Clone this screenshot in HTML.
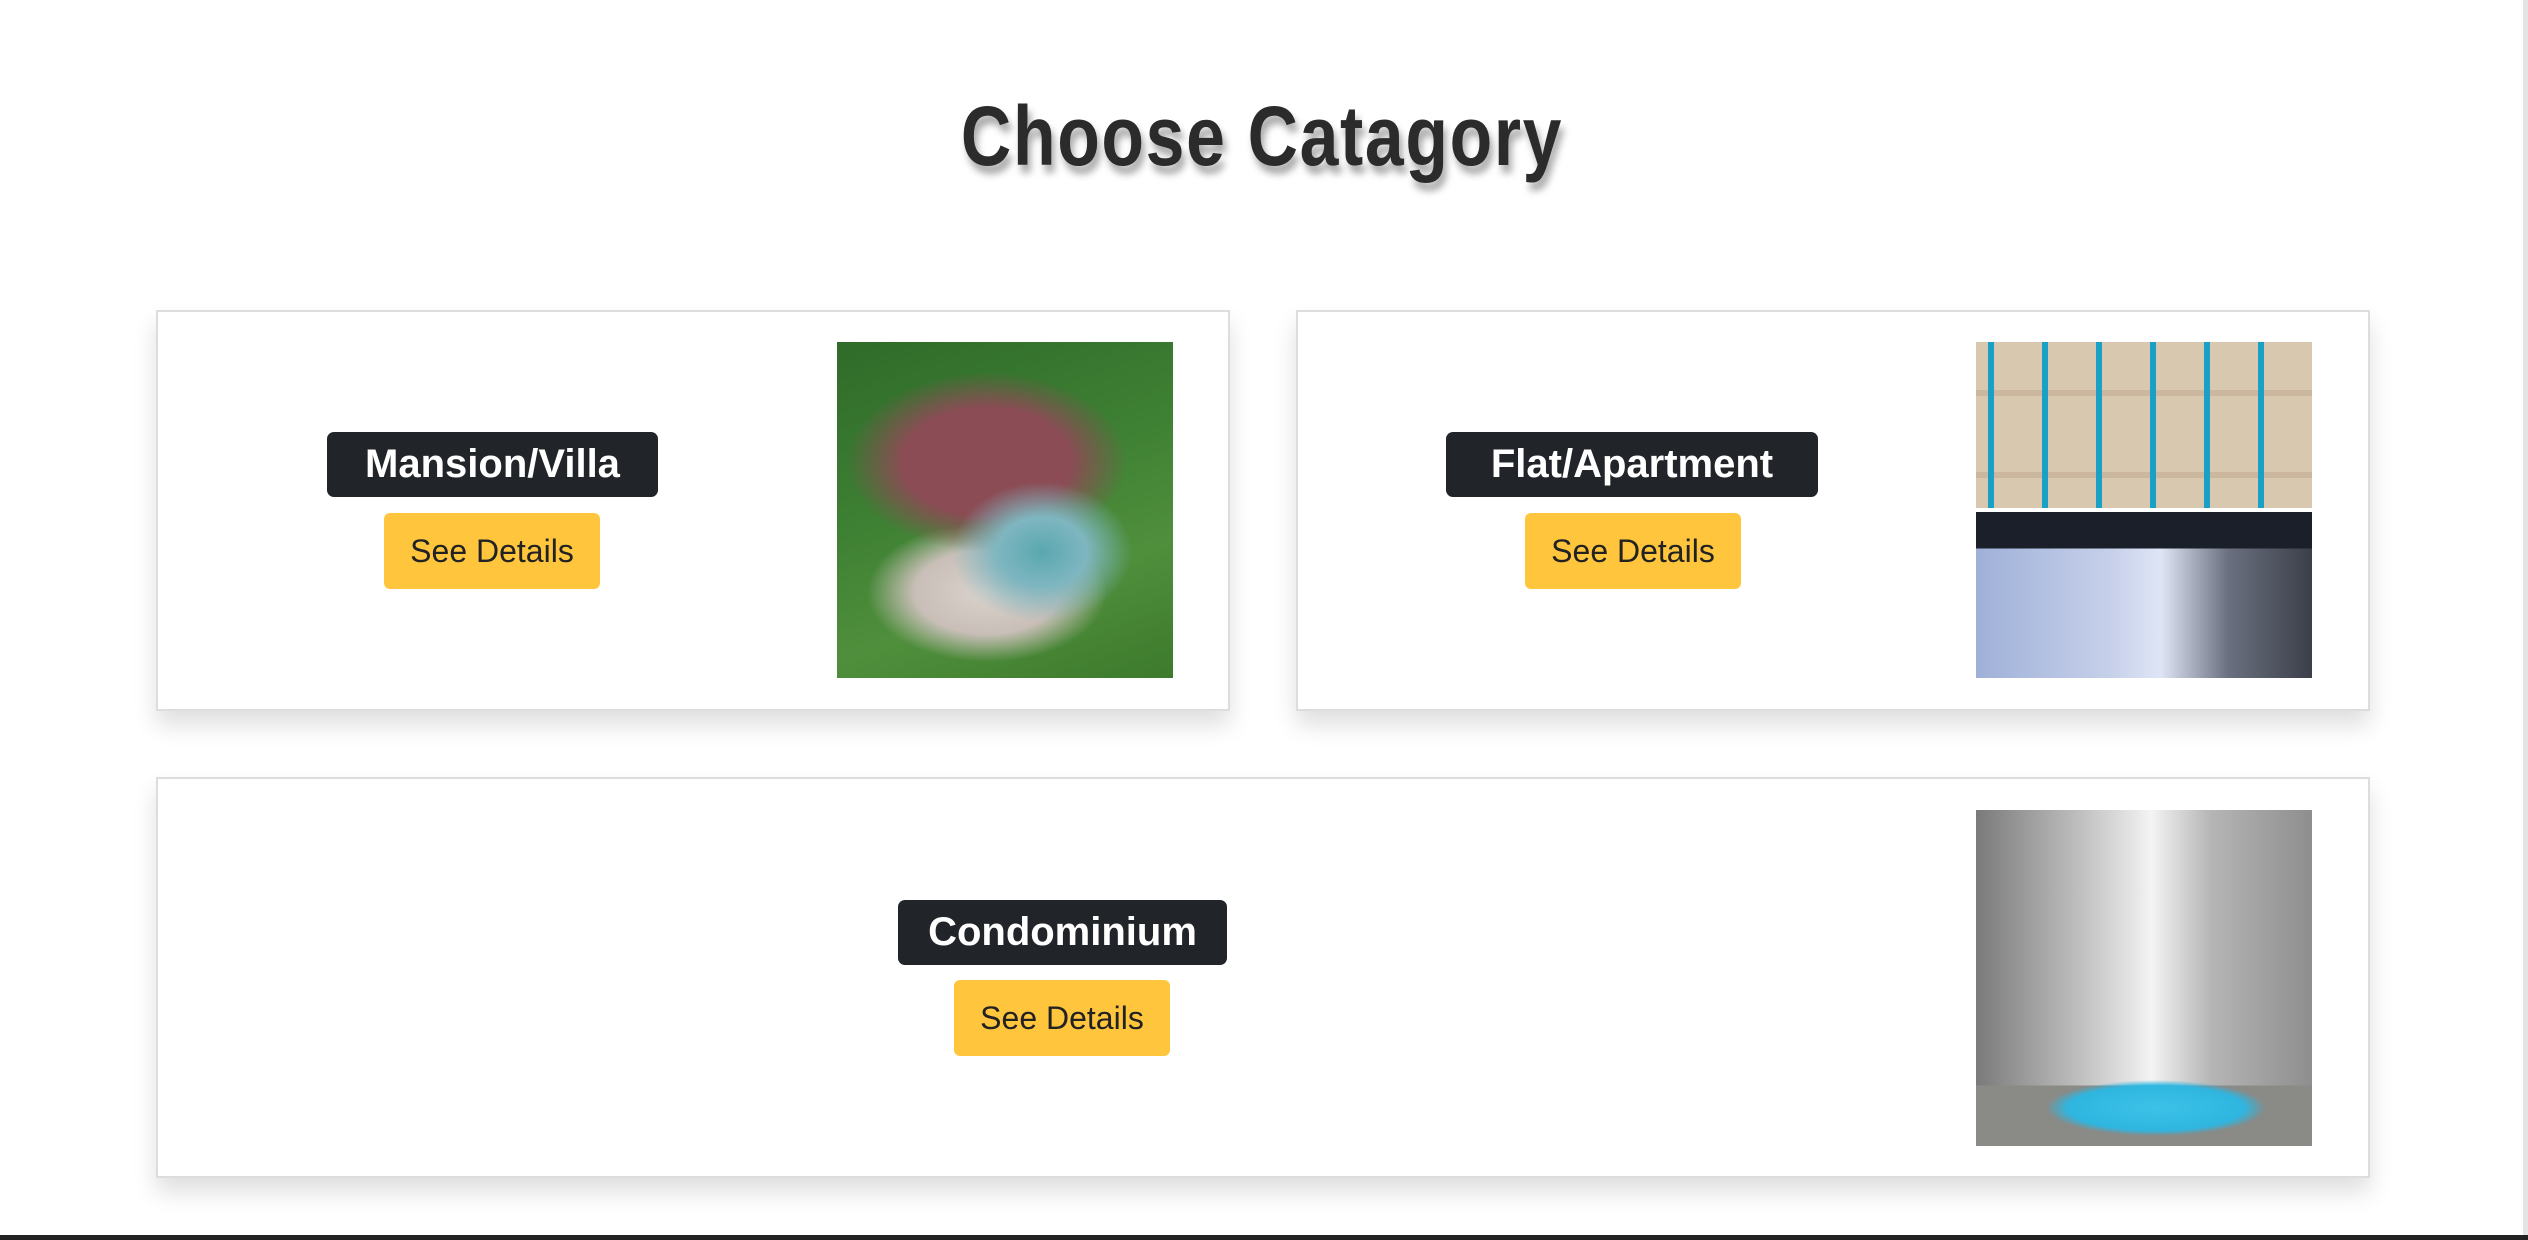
<!DOCTYPE html>
<html><head><style>
*{margin:0;padding:0;box-sizing:border-box}
body{width:2528px;height:1240px;background:#fff;position:relative;overflow:hidden;font-family:"Liberation Sans",sans-serif}
h1{position:absolute;left:0;width:2524px;top:88px;text-align:center;font-family:"Liberation Sans Narrow","Liberation Sans",sans-serif;font-weight:bold;font-size:84px;color:#2b2b2b;letter-spacing:2px;text-shadow:4px 8px 8px rgba(0,0,0,.35);transform:scaleX(.83)}
.card{position:absolute;background:#fff;border:2px solid #ddd;box-shadow:0 14px 22px rgba(0,0,0,.13)}
.badge{position:absolute;background:#212529;color:#fff;font-weight:bold;font-size:40px;border-radius:7px;text-align:center;line-height:65px;height:65px}
.btn{position:absolute;background:#ffc53d;color:#222;font-size:32px;border-radius:6px;text-align:center;line-height:76px;height:76px;width:216px}
.img{position:absolute;width:336px;height:336px}
.rline{position:absolute;right:0;top:0;width:5px;height:1240px;background:#e4e4e4}
.bbar{position:absolute;left:0;bottom:0;width:2528px;height:5px;background:#222}
</style></head><body>
<h1>Choose Catagory</h1>

<div class="card" style="left:156px;top:310px;width:1074px;height:401px"></div>
<div class="badge" style="left:327px;top:432px;width:331px">Mansion/Villa</div>
<div class="btn" style="left:384px;top:513px">See Details</div>
<div class="img" style="left:837px;top:342px;background:
radial-gradient(ellipse 90px 70px at 205px 210px,#5aa8b0 0,#7fb6c0 50%,transparent 100%),
radial-gradient(ellipse 140px 90px at 150px 120px,#8b4c55 0,#8b4c55 60%,transparent 100%),
radial-gradient(ellipse 120px 70px at 150px 250px,#d9d2cc 0,#c9bfb8 60%,transparent 100%),
linear-gradient(160deg,#2f6b2a,#3d7f33 40%,#4f8f3c 70%,#3d7a2c)"></div>

<div class="card" style="left:1296px;top:310px;width:1074px;height:401px"></div>
<div class="badge" style="left:1446px;top:432px;width:372px">Flat/Apartment</div>
<div class="btn" style="left:1525px;top:513px">See Details</div>
<div class="img" style="left:1976px;top:342px;height:166px;background:
repeating-linear-gradient(90deg,transparent 0 12px,#1aa0c4 12px 18px,transparent 18px 54px),
repeating-linear-gradient(0deg,#d9c8b0 0 30px,#cbb79e 30px 36px,#d9c8b0 36px 82px);"></div>
<div class="img" style="left:1976px;top:512px;height:166px;background:
linear-gradient(180deg,#1b1f2a 0 22%,transparent 22%),
linear-gradient(90deg,#9fb0d8 0,#c6d0ea 40%,#dfe5f5 55%,#6a7080 75%,#3b3f48 100%)"></div>

<div class="card" style="left:156px;top:777px;width:2214px;height:401px"></div>
<div class="badge" style="left:898px;top:900px;width:329px">Condominium</div>
<div class="btn" style="left:954px;top:980px">See Details</div>
<div class="img" style="left:1976px;top:810px;background:
radial-gradient(ellipse 110px 28px at 180px 298px,#3cc2e8 0,#2fb6e0 80%,transparent 100%),
linear-gradient(180deg,transparent 0 82%,#8a8a86 82%),
linear-gradient(90deg,#7a7a7a 0,#bdbdbd 30%,#e8e8e8 48%,#f4f4f4 52%,#b5b5b5 70%,#8e8e8e 100%)"></div>

<div class="rline"></div>
<div class="bbar"></div>
</body></html>
